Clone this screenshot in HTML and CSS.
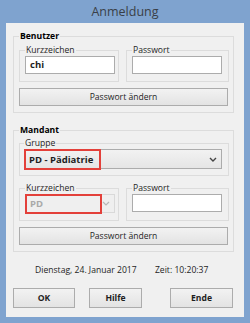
FILE: index.html
```html
<!DOCTYPE html>
<html lang="de">
  <head>
    <meta charset="UTF-8" />
    <title>Anmeldung</title>
    <link rel="stylesheet" href="styles.css">
  </head>
  <body>
    <div class="window">
      <div class="titlebar">Anmeldung</div>
      <div class="client">
        <fieldset class="group benutzer">
          <legend>Benutzer</legend>
          <div class="pair">
            <fieldset class="box">
              <legend>Kurzzeichen</legend>
              <div class="edit bold">chi</div>
            </fieldset>
            <fieldset class="box">
              <legend>Passwort</legend>
              <div class="edit"></div>
            </fieldset>
          </div>
          <button class="btn wide">Passwort ändern</button>
        </fieldset>

        <fieldset class="group mandant">
          <legend>Mandant</legend>
          <fieldset class="box full">
            <legend>Gruppe</legend>
            <div class="combo gruppe">
              <span class="bold">PD - Pädiatrie</span>
              <svg class="chev" width="8" height="5" viewBox="0 0 8 5"><path d="M1 1 L4 4 L7 1" fill="none" stroke="#444" stroke-width="1.4"/></svg>
              <span class="mark"></span>
            </div>
          </fieldset>
          <div class="pair">
            <fieldset class="box">
              <legend>Kurzzeichen</legend>
              <div class="combo disabled">
                <span class="bold">PD</span>
                <svg class="chev" width="8" height="5" viewBox="0 0 8 5"><path d="M1 1 L4 4 L7 1" fill="none" stroke="#b8b8b8" stroke-width="1.2"/></svg>
                <span class="mark"></span>
              </div>
            </fieldset>
            <fieldset class="box">
              <legend>Passwort</legend>
              <div class="edit"></div>
            </fieldset>
          </div>
          <button class="btn wide">Passwort ändern</button>
        </fieldset>

        <div class="status">
          <span>Dienstag, 24. Januar 2017</span>
          <span class="time">Zeit: 10:20:37</span>
        </div>

        <div class="actions">
          <button class="btn ok bold">OK</button>
          <button class="btn hilfe bold">Hilfe</button>
          <button class="btn ende bold">Ende</button>
        </div>
      </div>
    </div>
  </body>
</html>
```

FILE: styles.css
```css
* {
  box-sizing: border-box;
  margin: 0;
  padding: 0;
}
body {
  font-family: "Open Sans", sans-serif;
  font-size: 8.6px;
  color: #1e1e1e;
}
.bold {
  font-weight: 700;
}
.window {
  width: 250px;
  height: 323px;
  background: #7fa3cf;
  padding: 0 6px 6px 6px;
  display: flex;
  flex-direction: column;
}
.titlebar {
  height: 23px;
  line-height: 23px;
  text-align: center;
  font-size: 12.5px;
  color: #3a3f47;
}
.client {
  flex: 1;
  background: #f0f0f0;
  padding: 7px 0 0 7px;
}
fieldset {
  border: 1px solid #dcdcdc;
  min-width: 0;
}
legend {
  line-height: 12px;
  padding: 0 1px;
}
.group {
  width: 221px;
  padding: 2px 4px 6px 5px;

  & > legend {
    font-weight: 700;
    color: #000;
  }
}
.mandant {
  margin-top: 11px;
  padding-top: 1px;
}
.pair {
  display: grid;
  grid-template-columns: 100px 103px;
  column-gap: 7px;
}
.mandant .pair {
  margin-top: 6px;
}
.box {
  padding: 0 3px 7px 5px;
}
.box.full {
  width: 210px;
  padding: 0 3px 6px 4px;
}
.edit {
  width: 90px;
  height: 18px;
  background: #fff;
  border: 1px solid #acacac;
  padding: 0 4px;
  line-height: 16px;
  font-size: 9.5px;
}
.btn {
  display: block;
  font-family: inherit;
  font-size: 8.6px;
  color: #1e1e1e;
  height: 18px;
  border: 1px solid #acacac;
  background: linear-gradient(#f2f2f2, #e3e3e3);
  cursor: pointer;
}
.btn.wide {
  width: 209px;
  margin-top: 6px;
}
.combo {
  position: relative;
  height: 20px;
  border: 1px solid #acacac;
  background: linear-gradient(#f2f2f2, #e5e5e5);
  display: flex;
  align-items: center;
  padding: 0 4px 0 4px;
  font-size: 9.5px;

  & .chev {
    margin-left: auto;
  }
  & .mark {
    position: absolute;
    left: -1px;
    top: -1px;
    width: 77px;
    height: 21px;
    border: 2px solid #e3403a;
  }
}
.gruppe {
  width: 198px;
}
.disabled {
  width: 90px;
  height: 19px;
  background: #efefef;
  border-color: #d9d9d9;
  color: #a9a9a9;
  padding-right: 4px;

  & .mark {
    height: 20px;
  }
}
.status {
  margin-top: 12px;
  line-height: 12px;
  padding-left: 22px;
  color: #1e1e1e;

  & .time {
    margin-left: 16px;
  }
}
.actions {
  display: flex;
  margin-top: 12px;

  & .btn {
    height: 20px;
  }
  & .ok {
    width: 62px;
  }
  & .hilfe {
    width: 53px;
    margin-left: 14px;
  }
  & .ende {
    width: 63px;
    margin-left: 28px;
  }
}
```
